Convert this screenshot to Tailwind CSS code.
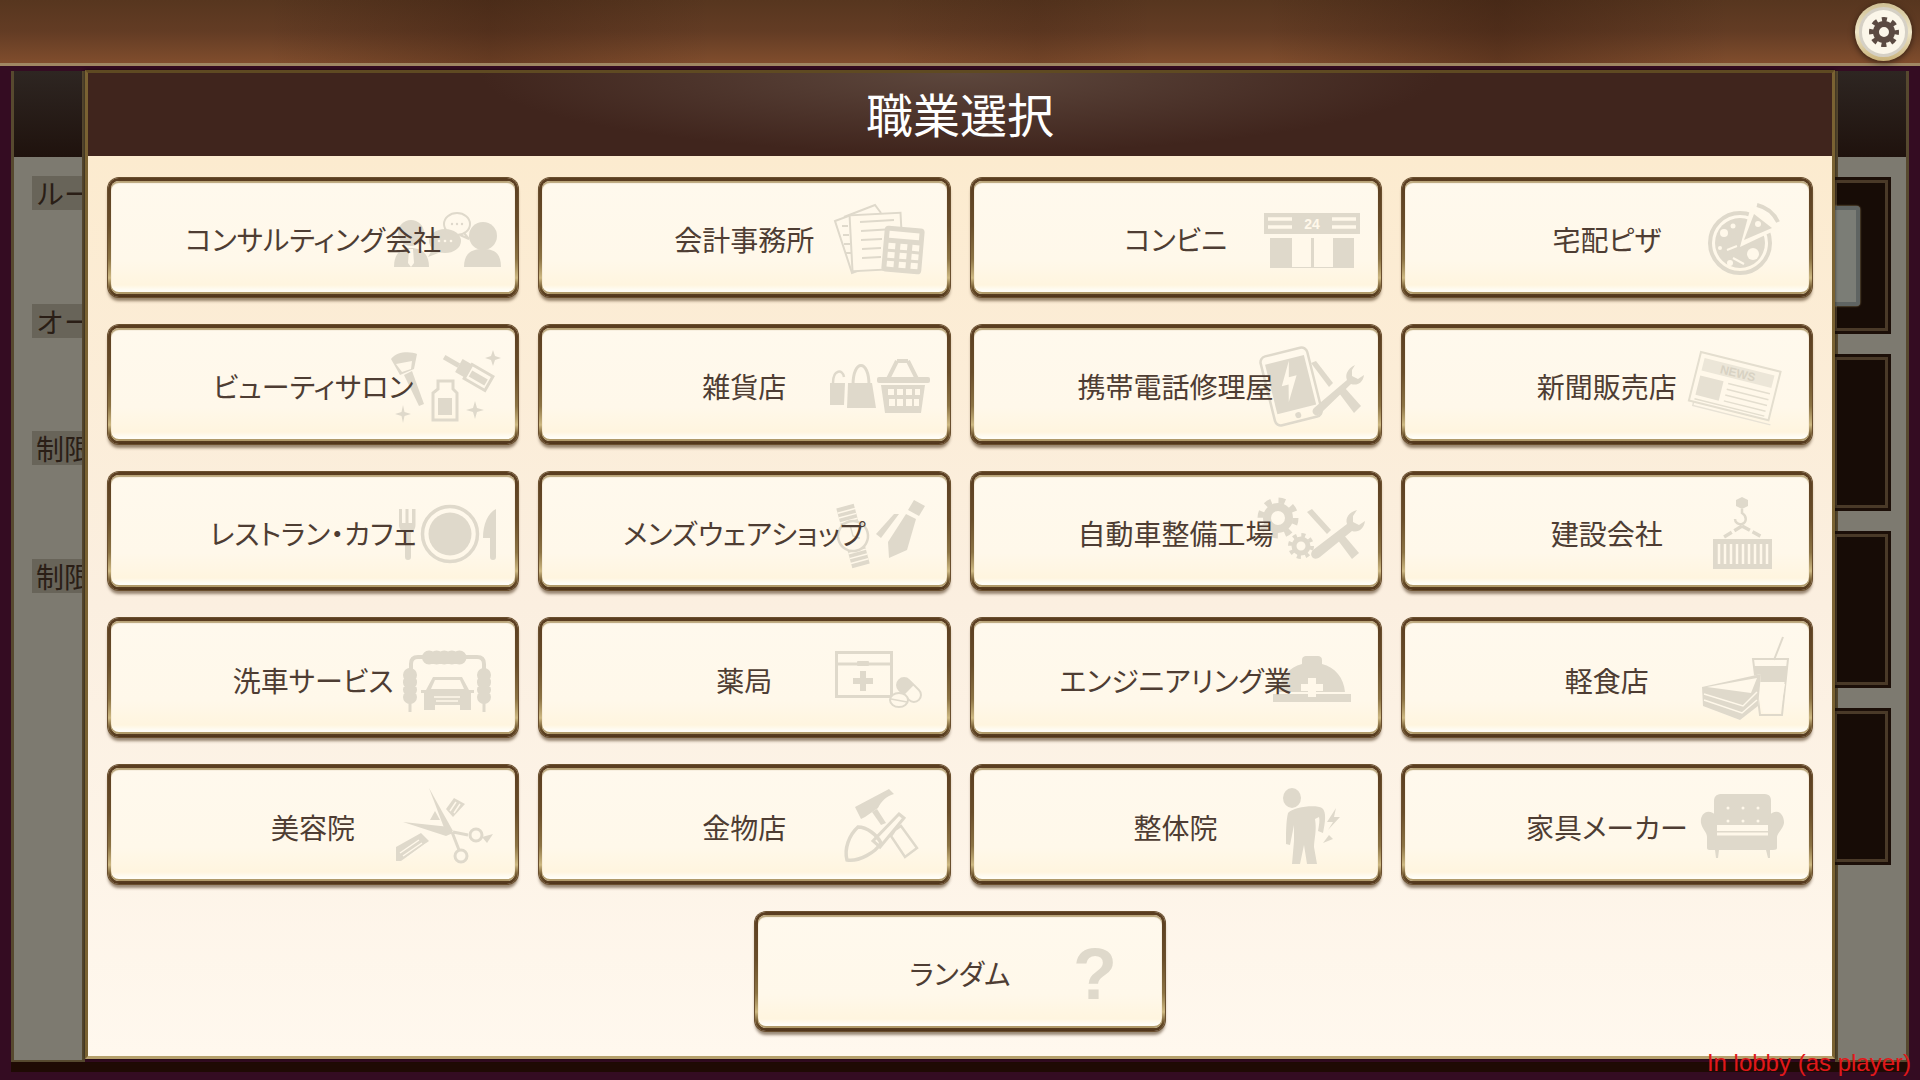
<!DOCTYPE html>
<html lang="ja">
<head>
  <meta charset="UTF-8">
  <title>職業選択</title>
  <script src="https://cdn.jsdelivr.net/npm/@tailwindcss/browser@4"></script>
</head>
<body class="bg-[#3a0e26]">
<div class="relative w-[1920px] h-[1080px] overflow-hidden flex flex-col bg-[#340c22] font-['Noto_Sans_CJK_JP',sans-serif]">

  <!-- top bar -->
  <div class="h-[66px] shrink-0 border-b-[3px] border-[#a08763] bg-[linear-gradient(90deg,rgba(45,20,10,0)_0%,rgba(45,20,10,0)_14%,rgba(45,20,10,0.3)_25.500%,rgba(45,20,10,0)_37%,rgba(45,20,10,0)_46%,rgba(45,20,10,0.16)_54%,rgba(45,20,10,0)_60%,rgba(45,20,10,0)_66%,rgba(45,20,10,0.38)_78%,rgba(45,20,10,0)_90%),linear-gradient(180deg,#57361f_0%,#633c24_50%,#804d2d_100%)]"></div>

  <!-- lobby behind the dialog -->
  <div class="flex justify-between px-[11px] pt-[5px]">
    <div class="w-[74px] h-[992px] flex flex-col border-x-[3px] border-b-[3px] border-[#57492f]">
      <div class="h-[86px] bg-[linear-gradient(180deg,#2e2622,#1f120d)]"></div>
      <div class="flex-1 bg-[#7d7a70] pt-[19px] pl-[18px] flex flex-col gap-[93.5px] overflow-hidden">
        <div class="w-[70px] h-[34px] bg-[#686459] text-[28px] leading-[34px] pl-[4px] text-[#2a1e16] whitespace-nowrap">ルー</div>
        <div class="w-[70px] h-[34px] bg-[#686459] text-[28px] leading-[34px] pl-[4px] text-[#2a1e16] whitespace-nowrap">オー</div>
        <div class="w-[70px] h-[34px] bg-[#686459] text-[28px] leading-[34px] pl-[4px] text-[#2a1e16] whitespace-nowrap">制限</div>
        <div class="w-[70px] h-[34px] bg-[#686459] text-[28px] leading-[34px] pl-[4px] text-[#2a1e16] whitespace-nowrap">制限</div>
      </div>
    </div>
    <div class="w-[74px] h-[992px] flex flex-col border-x-[3px] border-b-[3px] border-[#57492f]">
      <div class="h-[86px] bg-[linear-gradient(180deg,#2e2622,#1f120d)]"></div>
      <div class="flex-1 bg-[#7d7a70] pt-[20px] flex flex-col gap-[20px] items-end pr-[15px]">
        <div class="w-[60px] h-[157px] flex items-center bg-[#170c06] border-[3px] border-[#1c0f08] shadow-[inset_0_0_0_3px_#4a3a28]">
          <div class="w-[26px] h-[100px] bg-[#7b7d76] border-[4px] border-l-0 border-[#5f6462] rounded-r-[4px] shadow-[0_0_2px_#b8a878]"></div>
        </div>
        <div class="w-[60px] h-[157px] bg-[#170c06] border-[3px] border-[#1c0f08] shadow-[inset_0_0_0_3px_#4a3a28]"></div>
        <div class="w-[60px] h-[157px] bg-[#170c06] border-[3px] border-[#1c0f08] shadow-[inset_0_0_0_3px_#4a3a28]"></div>
        <div class="w-[60px] h-[157px] bg-[#170c06] border-[3px] border-[#1c0f08] shadow-[inset_0_0_0_3px_#4a3a28]"></div>
      </div>
    </div>
  </div>
  <div class="absolute left-[11px] right-[11px] top-[1062px] h-[10px] bg-[#1f0a04]"></div>

  <!-- settings button -->
  <div class="absolute left-[1855px] top-[3px] w-[57px] h-[58px] rounded-full p-[4px] bg-[linear-gradient(180deg,#cfc094,#efe6c8_50%,#c9b27a)] shadow-[0_2px_6px_rgba(0,0,0,0.55)]">
    <div class="w-full h-full rounded-full p-[3px] bg-[#d5d0c5]">
      <div class="w-full h-full rounded-full bg-[#fbf6e9] flex items-center justify-center">
        <svg class="w-[32px] h-[32px]" viewBox="0 0 32 32" fill="none" stroke="#5b4a42">
          <circle cx="16" cy="16" r="8" stroke-width="6"/>
          <circle cx="16" cy="16" r="12.5" stroke-width="5" stroke-dasharray="5 4.82" stroke-dashoffset="2.5"/>
        </svg>
      </div>
    </div>
  </div>

  <!-- job select dialog -->
  <div class="absolute left-[85px] top-[70px] w-[1750px] h-[989px] flex flex-col border-[3px] border-t-[#5f4a22] border-x-[#7a6232] border-b-[#b5a06c] shadow-[0_0_3px_rgba(0,0,0,0.6)]">
    <div class="h-[83px] shrink-0 flex items-center justify-center pb-[4px] text-white text-[47px] leading-none [font-feature-settings:'palt'] bg-[radial-gradient(ellipse_480px_80px_at_50%_0%,#5d473d,#40251d)]">職業選択</div>
    <div class="flex-1 pt-[22px] px-[20px] bg-[linear-gradient(180deg,#fcebcf_0%,#fbefe0_50%,#fff8ee_100%)]">
      <div class="grid grid-cols-4 gap-x-[21px] gap-y-[28px]">

        <!-- コンサルティング会社 -->
        <div class="h-[118.8px] rounded-[11px] p-[3px] bg-[linear-gradient(180deg,#5a3d20_0%,#6a4e2a_40%,#8c7344_68%,#cdb882_84%,#6b5029_93%,#4f341b_100%)] shadow-[0_0_0_1px_#6a4f2e,0_4px_3px_rgba(70,45,20,0.55)]">
          <div class="relative h-full overflow-hidden rounded-[8px] flex items-center justify-center bg-[linear-gradient(180deg,#fff9ed,#fff8ea_70%,#fff5df_92%,#fffdf6_97%)] shadow-[inset_0_2px_1px_#b9a478,inset_0_-2px_0_#b09a6a]">
            <svg class="absolute -left-[3px] -top-[3px] w-[410px] h-[119px] fill-[#dfd9cb]" viewBox="0 0 410 119">
              <circle cx="303" cy="55" r="13"/><path d="M286 89C286 74 294 70 303 70S321 74 321 89Z"/><path d="M301 71H305L306 85 303 89 300 85Z" fill="#fff8ea"/>
              <circle cx="375" cy="58" r="14"/><path d="M356 89C356 74 365 71 375 71S393 74 393 89Z"/>
              <ellipse cx="337" cy="63" rx="16" ry="12"/><path d="M325 70L320 79 333 74Z"/>
              <circle cx="331" cy="63" r="1.3" fill="#fff8ea"/><circle cx="337" cy="63" r="1.3" fill="#fff8ea"/><circle cx="343" cy="63" r="1.3" fill="#fff8ea"/>
              <ellipse cx="349" cy="46" rx="13" ry="11" fill="none" stroke="#dfd9cb" stroke-width="2"/><path d="M356 55L361 61 352 57" fill="none" stroke="#dfd9cb" stroke-width="2"/>
              <circle cx="344" cy="46" r="1.2"/><circle cx="349" cy="46" r="1.2"/><circle cx="354" cy="46" r="1.2"/>
            </svg>
            <span class="relative pt-[4px] text-[28px] leading-none text-[#4e3d33] [font-feature-settings:'palt']">コンサルティング会社</span>
          </div>
        </div>

        <!-- 会計事務所 -->
        <div class="h-[118.8px] rounded-[11px] p-[3px] bg-[linear-gradient(180deg,#5a3d20_0%,#6a4e2a_40%,#8c7344_68%,#cdb882_84%,#6b5029_93%,#4f341b_100%)] shadow-[0_0_0_1px_#6a4f2e,0_4px_3px_rgba(70,45,20,0.55)]">
          <div class="relative h-full overflow-hidden rounded-[8px] flex items-center justify-center bg-[linear-gradient(180deg,#fff9ed,#fff8ea_70%,#fff5df_92%,#fffdf6_97%)] shadow-[inset_0_2px_1px_#b9a478,inset_0_-2px_0_#b09a6a]">
            <svg class="absolute -left-[3px] -top-[3px] w-[410px] h-[119px] fill-[#dfd9cb]" viewBox="0 0 410 119">
              <path d="M296 43L312 37 321 92 313 95Z" fill="none" stroke="#dfd9cb" stroke-width="2"/>
              <path d="M305 39L336 27 342 35" fill="none" stroke="#dfd9cb" stroke-width="2"/>
              <path d="M303 48H309M304 57H310M305 66H311M307 75H312" stroke="#dfd9cb" stroke-width="2"/>
              <rect x="312" y="36" width="51" height="56" fill="#fff8ea" stroke="#dfd9cb" stroke-width="2" transform="rotate(-3 337 64)"/>
              <path d="M321 44L355 42M322 53L355 51M322 62L343 61M323 71L342 70M323 80L342 79" stroke="#dfd9cb" stroke-width="2"/>
              <g transform="rotate(5 364 72)">
                <rect x="344" y="49" width="40" height="46" rx="4"/><rect x="349" y="54" width="30" height="7" fill="#fff8ea"/>
                <g fill="#fff8ea"><rect x="349" y="66" width="7" height="6"/><rect x="361" y="66" width="7" height="6"/><rect x="373" y="66" width="7" height="6"/><rect x="349" y="75" width="7" height="6"/><rect x="361" y="75" width="7" height="6"/><rect x="373" y="75" width="7" height="6"/><rect x="349" y="84" width="7" height="6"/><rect x="361" y="84" width="7" height="6"/><rect x="373" y="84" width="7" height="6"/></g>
              </g>
            </svg>
            <span class="relative pt-[4px] text-[28px] leading-none text-[#4e3d33] [font-feature-settings:'palt']">会計事務所</span>
          </div>
        </div>

        <!-- コンビニ -->
        <div class="h-[118.8px] rounded-[11px] p-[3px] bg-[linear-gradient(180deg,#5a3d20_0%,#6a4e2a_40%,#8c7344_68%,#cdb882_84%,#6b5029_93%,#4f341b_100%)] shadow-[0_0_0_1px_#6a4f2e,0_4px_3px_rgba(70,45,20,0.55)]">
          <div class="relative h-full overflow-hidden rounded-[8px] flex items-center justify-center bg-[linear-gradient(180deg,#fff9ed,#fff8ea_70%,#fff5df_92%,#fffdf6_97%)] shadow-[inset_0_2px_1px_#b9a478,inset_0_-2px_0_#b09a6a]">
            <svg class="absolute -left-[3px] -top-[3px] w-[410px] h-[119px] fill-[#dfd9cb]" viewBox="0 0 410 119">
              <rect x="293" y="35" width="96" height="21"/>
              <path d="M297 41H321M297 49H321M361 41H385M361 49H385" stroke="#fff8ea" stroke-width="3.500"/>
              <text x="341" y="51" text-anchor="middle" font-family="Liberation Sans" font-weight="700" font-size="14" fill="#fff8ea">24</text>
              <path d="M299 60H383V90H299Z"/>
              <rect x="321" y="60" width="19" height="29" fill="#fff8ea"/><rect x="343" y="60" width="19" height="29" fill="#fff8ea"/>
            </svg>
            <span class="relative pt-[4px] text-[28px] leading-none text-[#4e3d33] [font-feature-settings:'palt']">コンビニ</span>
          </div>
        </div>

        <!-- 宅配ピザ -->
        <div class="h-[118.8px] rounded-[11px] p-[3px] bg-[linear-gradient(180deg,#5a3d20_0%,#6a4e2a_40%,#8c7344_68%,#cdb882_84%,#6b5029_93%,#4f341b_100%)] shadow-[0_0_0_1px_#6a4f2e,0_4px_3px_rgba(70,45,20,0.55)]">
          <div class="relative h-full overflow-hidden rounded-[8px] flex items-center justify-center bg-[linear-gradient(180deg,#fff9ed,#fff8ea_70%,#fff5df_92%,#fffdf6_97%)] shadow-[inset_0_2px_1px_#b9a478,inset_0_-2px_0_#b09a6a]">
            <svg class="absolute -left-[3px] -top-[3px] w-[410px] h-[119px] fill-[#dfd9cb]" viewBox="0 0 410 119">
              <circle cx="338" cy="65" r="30" fill="none" stroke="#dfd9cb" stroke-width="4"/>
              <circle cx="338" cy="65" r="25"/>
              <path d="M338 69L349 28 378 50Z" fill="#fff8ea"/>
              <path d="M342 62L352 36 370 50Z"/>
              <path d="M355 27A31 31 0 0 1 376 44" fill="none" stroke="#dfd9cb" stroke-width="4"/>
              <g fill="#fff8ea"><circle cx="351" cy="76" r="6"/><circle cx="322" cy="55" r="4"/><circle cx="331" cy="48" r="2.5"/><circle cx="328" cy="85" r="3"/><circle cx="318" cy="70" r="2"/></g>
              <circle cx="356" cy="46" r="3" fill="#fff8ea"/>
              <path d="M325 72L335 68M331 80L342 86" stroke="#fff8ea" stroke-width="2"/>
            </svg>
            <span class="relative pt-[4px] text-[28px] leading-none text-[#4e3d33] [font-feature-settings:'palt']">宅配ピザ</span>
          </div>
        </div>

        <!-- ビューティサロン -->
        <div class="h-[118.8px] rounded-[11px] p-[3px] bg-[linear-gradient(180deg,#5a3d20_0%,#6a4e2a_40%,#8c7344_68%,#cdb882_84%,#6b5029_93%,#4f341b_100%)] shadow-[0_0_0_1px_#6a4f2e,0_4px_3px_rgba(70,45,20,0.55)]">
          <div class="relative h-full overflow-hidden rounded-[8px] flex items-center justify-center bg-[linear-gradient(180deg,#fff9ed,#fff8ea_70%,#fff5df_92%,#fffdf6_97%)] shadow-[inset_0_2px_1px_#b9a478,inset_0_-2px_0_#b09a6a]">
            <svg class="absolute -left-[3px] -top-[3px] w-[410px] h-[119px] fill-[#dfd9cb]" viewBox="0 0 410 119">
              <path d="M283 34C288 26 303 26 309 29L306 44 292 50Z"/><path d="M288 39L304 36 303 44 294 47Z" fill="#fff8ea"/>
              <path d="M296 50L304 46 316 79 311 81Z"/>
              <path d="M330 56H345V64L349 68V95H325V68L330 64Z" fill="none" stroke="#dfd9cb" stroke-width="3"/><rect x="330" y="73" width="14" height="17"/>
              <g transform="rotate(30 361 47)"><rect x="332" y="44" width="17" height="5"/><rect x="349" y="39" width="11" height="15"/><rect x="360" y="39" width="24" height="16" fill="none" stroke="#dfd9cb" stroke-width="3"/><rect x="363" y="44" width="18" height="7"/></g>
              <path d="M385 25L387 31 393 33 387 35 385 41 383 35 377 33 383 31Z"/>
              <path d="M295 80L296.5 87 303 89 296.5 91 295 98 293.500 91 287 89 293.500 87Z"/>
              <path d="M367 76L369 83 376 85 369 87 367 94 365 87 358 85 365 83Z"/>
            </svg>
            <span class="relative pt-[4px] text-[28px] leading-none text-[#4e3d33] [font-feature-settings:'palt']">ビューティサロン</span>
          </div>
        </div>

        <!-- 雑貨店 -->
        <div class="h-[118.8px] rounded-[11px] p-[3px] bg-[linear-gradient(180deg,#5a3d20_0%,#6a4e2a_40%,#8c7344_68%,#cdb882_84%,#6b5029_93%,#4f341b_100%)] shadow-[0_0_0_1px_#6a4f2e,0_4px_3px_rgba(70,45,20,0.55)]">
          <div class="relative h-full overflow-hidden rounded-[8px] flex items-center justify-center bg-[linear-gradient(180deg,#fff9ed,#fff8ea_70%,#fff5df_92%,#fffdf6_97%)] shadow-[inset_0_2px_1px_#b9a478,inset_0_-2px_0_#b09a6a]">
            <svg class="absolute -left-[3px] -top-[3px] w-[410px] h-[119px] fill-[#dfd9cb]" viewBox="0 0 410 119">
              <path d="M291 58H306L305 80H291Z"/><path d="M294 58C294 44 304 44 305 52" fill="none" stroke="#dfd9cb" stroke-width="2.500"/>
              <path d="M309 58H333L337 83H308Z"/><path d="M314 60C314 34 330 34 330 60" fill="none" stroke="#dfd9cb" stroke-width="3"/>
              <path d="M349 54L358 36M378 54L369 36M358 36H369" fill="none" stroke="#dfd9cb" stroke-width="4"/>
              <rect x="338" y="52" width="53" height="6" rx="2"/>
              <path d="M342 60H386L382 88H346Z"/>
              <g fill="#fff8ea"><rect x="349" y="64" width="6" height="6"/><rect x="358" y="64" width="6" height="6"/><rect x="367" y="64" width="6" height="6"/><rect x="376" y="64" width="5" height="6"/><rect x="350" y="74" width="6" height="7"/><rect x="358" y="74" width="6" height="7"/><rect x="367" y="74" width="6" height="7"/><rect x="375" y="74" width="5" height="7"/></g>
            </svg>
            <span class="relative pt-[4px] text-[28px] leading-none text-[#4e3d33] [font-feature-settings:'palt']">雑貨店</span>
          </div>
        </div>

        <!-- 携帯電話修理屋 -->
        <div class="h-[118.8px] rounded-[11px] p-[3px] bg-[linear-gradient(180deg,#5a3d20_0%,#6a4e2a_40%,#8c7344_68%,#cdb882_84%,#6b5029_93%,#4f341b_100%)] shadow-[0_0_0_1px_#6a4f2e,0_4px_3px_rgba(70,45,20,0.55)]">
          <div class="relative h-full overflow-hidden rounded-[8px] flex items-center justify-center bg-[linear-gradient(180deg,#fff9ed,#fff8ea_70%,#fff5df_92%,#fffdf6_97%)] shadow-[inset_0_2px_1px_#b9a478,inset_0_-2px_0_#b09a6a]">
            <svg class="absolute -left-[3px] -top-[3px] w-[410px] h-[119px] fill-[#dfd9cb]" viewBox="0 0 410 119">
              <g transform="rotate(-14 320 61)">
                <rect x="296" y="26" width="48" height="71" rx="6" fill="none" stroke="#dfd9cb" stroke-width="2.500"/>
                <rect x="300" y="34" width="40" height="51"/>
                <path d="M324 36L311 59 318 59 314 76 328 52 320 52Z" fill="#fff8ea"/>
                <circle cx="320" cy="91" r="3"/>
              </g>
              <path d="M384 40C376 44 374 50 376 55L343 83C339 87 344 93 349 89L380 59C386 61 392 58 393 50L387 54 381 51 381 45Z"/>
              <path d="M340 38L345 36 362 58 358 62Z"/><path d="M368 68L374 63 390 81 383 88Z"/>
            </svg>
            <span class="relative pt-[4px] text-[28px] leading-none text-[#4e3d33] [font-feature-settings:'palt']">携帯電話修理屋</span>
          </div>
        </div>

        <!-- 新聞販売店 -->
        <div class="h-[118.8px] rounded-[11px] p-[3px] bg-[linear-gradient(180deg,#5a3d20_0%,#6a4e2a_40%,#8c7344_68%,#cdb882_84%,#6b5029_93%,#4f341b_100%)] shadow-[0_0_0_1px_#6a4f2e,0_4px_3px_rgba(70,45,20,0.55)]">
          <div class="relative h-full overflow-hidden rounded-[8px] flex items-center justify-center bg-[linear-gradient(180deg,#fff9ed,#fff8ea_70%,#fff5df_92%,#fffdf6_97%)] shadow-[inset_0_2px_1px_#b9a478,inset_0_-2px_0_#b09a6a]">
            <svg class="absolute -left-[3px] -top-[3px] w-[410px] h-[119px] fill-[#dfd9cb]" viewBox="0 0 410 119">
              <g transform="rotate(14 332 64)">
                <path d="M296 42V90H376" fill="none" stroke="#e8e2d5" stroke-width="1.500"/>
                <rect x="291" y="36" width="82" height="50" fill="#fff8ea" stroke="#e4decf" stroke-width="2"/>
                <rect x="296" y="41" width="72" height="13" fill="#ece6d8"/>
                <text x="332" y="52" text-anchor="middle" font-family="Liberation Sans" font-weight="700" font-size="12" fill="#d8d2c3">NEWS</text>
                <rect x="296" y="59" width="24" height="20" fill="#e6e0d2"/>
                <path d="M325 60H368M325 66H368M325 72H368M325 78H368M296 83H368" stroke="#e4decf" stroke-width="1.500"/>
              </g>
            </svg>
            <span class="relative pt-[4px] text-[28px] leading-none text-[#4e3d33] [font-feature-settings:'palt']">新聞販売店</span>
          </div>
        </div>

        <!-- レストラン・カフェ -->
        <div class="h-[118.8px] rounded-[11px] p-[3px] bg-[linear-gradient(180deg,#5a3d20_0%,#6a4e2a_40%,#8c7344_68%,#cdb882_84%,#6b5029_93%,#4f341b_100%)] shadow-[0_0_0_1px_#6a4f2e,0_4px_3px_rgba(70,45,20,0.55)]">
          <div class="relative h-full overflow-hidden rounded-[8px] flex items-center justify-center bg-[linear-gradient(180deg,#fff9ed,#fff8ea_70%,#fff5df_92%,#fffdf6_97%)] shadow-[inset_0_2px_1px_#b9a478,inset_0_-2px_0_#b09a6a]">
            <svg class="absolute -left-[3px] -top-[3px] w-[410px] h-[119px] fill-[#dfd9cb]" viewBox="0 0 410 119">
              <path d="M291 36H294V50H297.500V36H300.500V50H304V36H307.500V52C307.500 57 304 59 303 60V84A2.500 2.500 0 0 1 297 84V60C295 59 291 57 291 52Z" transform="translate(0 1)"/>
              <circle cx="342" cy="62" r="27.500" fill="none" stroke="#dfd9cb" stroke-width="3.500"/>
              <circle cx="342" cy="62" r="21.500"/>
              <path d="M388 37V85A3 3 0 0 1 382 85V66H375C375 52 380 41 388 37Z"/>
            </svg>
            <span class="relative pt-[4px] text-[28px] leading-none text-[#4e3d33] [font-feature-settings:'palt']">レストラン・カフェ</span>
          </div>
        </div>

        <!-- メンズウェアショップ -->
        <div class="h-[118.8px] rounded-[11px] p-[3px] bg-[linear-gradient(180deg,#5a3d20_0%,#6a4e2a_40%,#8c7344_68%,#cdb882_84%,#6b5029_93%,#4f341b_100%)] shadow-[0_0_0_1px_#6a4f2e,0_4px_3px_rgba(70,45,20,0.55)]">
          <div class="relative h-full overflow-hidden rounded-[8px] flex items-center justify-center bg-[linear-gradient(180deg,#fff9ed,#fff8ea_70%,#fff5df_92%,#fffdf6_97%)] shadow-[inset_0_2px_1px_#b9a478,inset_0_-2px_0_#b09a6a]">
            <svg class="absolute -left-[3px] -top-[3px] w-[410px] h-[119px] fill-[#dfd9cb]" viewBox="0 0 410 119">
              <g transform="rotate(-15 314 64)">
                <rect x="305" y="33" width="18" height="62"/>
                <path d="M305 38H323M305 43H323M305 48H323M305 80H323M305 85H323M305 90H323" stroke="#fff8ea" stroke-width="1.500"/>
                <circle cx="314" cy="64" r="15" fill="#fff8ea" stroke="#dfd9cb" stroke-width="2.500"/>
                <path d="M314 54V64L320 68" fill="none" stroke="#dfd9cb" stroke-width="1.500"/>
              </g>
              <path d="M375 28L386 34 380 44 369 38Z"/>
              <path d="M367 42L377 47 368 78 350 86 349 70Z"/>
              <path d="M337 62L355 42 360 42 342 66Z"/>
            </svg>
            <span class="relative pt-[4px] text-[28px] leading-none text-[#4e3d33] [font-feature-settings:'palt']">メンズウェアショップ</span>
          </div>
        </div>

        <!-- 自動車整備工場 -->
        <div class="h-[118.8px] rounded-[11px] p-[3px] bg-[linear-gradient(180deg,#5a3d20_0%,#6a4e2a_40%,#8c7344_68%,#cdb882_84%,#6b5029_93%,#4f341b_100%)] shadow-[0_0_0_1px_#6a4f2e,0_4px_3px_rgba(70,45,20,0.55)]">
          <div class="relative h-full overflow-hidden rounded-[8px] flex items-center justify-center bg-[linear-gradient(180deg,#fff9ed,#fff8ea_70%,#fff5df_92%,#fffdf6_97%)] shadow-[inset_0_2px_1px_#b9a478,inset_0_-2px_0_#b09a6a]">
            <svg class="absolute -left-[3px] -top-[3px] w-[410px] h-[119px] fill-[#dfd9cb]" viewBox="0 0 410 119">
              <g fill="none" stroke="#dfd9cb">
                <circle cx="307" cy="46" r="11" stroke-width="8"/><circle cx="307" cy="46" r="17.500" stroke-width="6" stroke-dasharray="6.500 7.240"/>
                <circle cx="330" cy="74" r="7" stroke-width="5"/><circle cx="330" cy="74" r="11" stroke-width="4" stroke-dasharray="4 4.640"/>
              </g>
              <path d="M386 38C378 40 374 46 376 52L342 78C337 83 343 90 349 85L381 59C387 61 393 57 394 49L388 53 382 50 382 44Z"/>
              <path d="M336 40L341 37 360 58 356 62Z"/><path d="M366 67L372 62 388 81 381 87Z"/>
            </svg>
            <span class="relative pt-[4px] text-[28px] leading-none text-[#4e3d33] [font-feature-settings:'palt']">自動車整備工場</span>
          </div>
        </div>

        <!-- 建設会社 -->
        <div class="h-[118.8px] rounded-[11px] p-[3px] bg-[linear-gradient(180deg,#5a3d20_0%,#6a4e2a_40%,#8c7344_68%,#cdb882_84%,#6b5029_93%,#4f341b_100%)] shadow-[0_0_0_1px_#6a4f2e,0_4px_3px_rgba(70,45,20,0.55)]">
          <div class="relative h-full overflow-hidden rounded-[8px] flex items-center justify-center bg-[linear-gradient(180deg,#fff9ed,#fff8ea_70%,#fff5df_92%,#fffdf6_97%)] shadow-[inset_0_2px_1px_#b9a478,inset_0_-2px_0_#b09a6a]">
            <svg class="absolute -left-[3px] -top-[3px] w-[410px] h-[119px] fill-[#dfd9cb]" viewBox="0 0 410 119">
              <path d="M340 25L346 28V34L340 37 334 34V28Z"/>
              <path d="M340 37V41C345 44 345 50 340 52 336 53 333 50 333 47" fill="none" stroke="#dfd9cb" stroke-width="2.500"/>
              <path d="M340 54L322 65M340 54L360 65" stroke="#dfd9cb" stroke-width="3.500" stroke-dasharray="9 3"/>
              <rect x="311" y="67" width="59" height="30"/>
              <path d="M317 72V92M323 72V92M329 72V92M335 72V92M341 72V92M347 72V92M353 72V92M359 72V92M365 72V92" stroke="#fff8ea" stroke-width="2.500"/>
            </svg>
            <span class="relative pt-[4px] text-[28px] leading-none text-[#4e3d33] [font-feature-settings:'palt']">建設会社</span>
          </div>
        </div>

        <!-- 洗車サービス -->
        <div class="h-[118.8px] rounded-[11px] p-[3px] bg-[linear-gradient(180deg,#5a3d20_0%,#6a4e2a_40%,#8c7344_68%,#cdb882_84%,#6b5029_93%,#4f341b_100%)] shadow-[0_0_0_1px_#6a4f2e,0_4px_3px_rgba(70,45,20,0.55)]">
          <div class="relative h-full overflow-hidden rounded-[8px] flex items-center justify-center bg-[linear-gradient(180deg,#fff9ed,#fff8ea_70%,#fff5df_92%,#fffdf6_97%)] shadow-[inset_0_2px_1px_#b9a478,inset_0_-2px_0_#b09a6a]">
            <svg class="absolute -left-[3px] -top-[3px] w-[410px] h-[119px] fill-[#dfd9cb]" viewBox="0 0 410 119">
              <path d="M303 54V46C303 41 306 39 310 39H369C373 39 376 41 376 46V54" fill="none" stroke="#dfd9cb" stroke-width="4"/>
              <path d="M321 39.500H359" fill="none" stroke="#dfd9cb" stroke-width="14" stroke-linecap="round" stroke-dasharray="0.100 7.500"/>
              <path d="M302 57V86M376 57V86" fill="none" stroke="#dfd9cb" stroke-width="14" stroke-linecap="round" stroke-dasharray="0.100 7.200"/>
              <path d="M302 50V94M376 50V94" stroke="#dfd9cb" stroke-width="3"/>
              <path d="M325 59H354L361 72H366V75H363V92H352V87H327V92H316V75H313V72H318Z"/>
              <path d="M327 62H352L356 71H323Z" fill="#fff8ea"/>
              <path d="M326 79H352M328 83H350" stroke="#fff8ea" stroke-width="1.500"/>
            </svg>
            <span class="relative pt-[4px] text-[28px] leading-none text-[#4e3d33] [font-feature-settings:'palt']">洗車サービス</span>
          </div>
        </div>

        <!-- 薬局 -->
        <div class="h-[118.8px] rounded-[11px] p-[3px] bg-[linear-gradient(180deg,#5a3d20_0%,#6a4e2a_40%,#8c7344_68%,#cdb882_84%,#6b5029_93%,#4f341b_100%)] shadow-[0_0_0_1px_#6a4f2e,0_4px_3px_rgba(70,45,20,0.55)]">
          <div class="relative h-full overflow-hidden rounded-[8px] flex items-center justify-center bg-[linear-gradient(180deg,#fff9ed,#fff8ea_70%,#fff5df_92%,#fffdf6_97%)] shadow-[inset_0_2px_1px_#b9a478,inset_0_-2px_0_#b09a6a]">
            <svg class="absolute -left-[3px] -top-[3px] w-[410px] h-[119px] fill-[#dfd9cb]" viewBox="0 0 410 119">
              <rect x="297.500" y="34.500" width="55" height="44" fill="none" stroke="#dfd9cb" stroke-width="3"/>
              <path d="M297 46H352" stroke="#dfd9cb" stroke-width="3"/><rect x="318" y="43" width="12" height="5" rx="1"/>
              <path d="M321 53H327V60H334V66H327V73H321V66H314V60H321Z"/>
              <g transform="rotate(45 370 72)"><rect x="356" y="65" width="28" height="14" rx="7" fill="none" stroke="#dfd9cb" stroke-width="2"/><path d="M370 65H363A7 7 0 0 0 363 79H370Z"/></g>
              <ellipse cx="360" cy="82" rx="9" ry="7" fill="#fff8ea" stroke="#dfd9cb" stroke-width="2"/><path d="M352 81L368 84" stroke="#dfd9cb" stroke-width="1.500"/>
            </svg>
            <span class="relative pt-[4px] text-[28px] leading-none text-[#4e3d33] [font-feature-settings:'palt']">薬局</span>
          </div>
        </div>

        <!-- エンジニアリング業 -->
        <div class="h-[118.8px] rounded-[11px] p-[3px] bg-[linear-gradient(180deg,#5a3d20_0%,#6a4e2a_40%,#8c7344_68%,#cdb882_84%,#6b5029_93%,#4f341b_100%)] shadow-[0_0_0_1px_#6a4f2e,0_4px_3px_rgba(70,45,20,0.55)]">
          <div class="relative h-full overflow-hidden rounded-[8px] flex items-center justify-center bg-[linear-gradient(180deg,#fff9ed,#fff8ea_70%,#fff5df_92%,#fffdf6_97%)] shadow-[inset_0_2px_1px_#b9a478,inset_0_-2px_0_#b09a6a]">
            <svg class="absolute -left-[3px] -top-[3px] w-[410px] h-[119px] fill-[#dfd9cb]" viewBox="0 0 410 119">
              <path d="M331 42C331 39 333 38 335 38H347C349 38 351 39 351 42V46C364 49 373 60 374 74H308C309 60 318 49 331 46Z"/>
              <path d="M302 76H380V84H302Z"/>
              <path d="M302 75H380" stroke="#fff8ea" stroke-width="2"/>
              <path d="M337 60H345V66H352V73H345V79H337V73H330V66H337Z" fill="#fff8ea"/>
            </svg>
            <span class="relative pt-[4px] text-[28px] leading-none text-[#4e3d33] [font-feature-settings:'palt']">エンジニアリング業</span>
          </div>
        </div>

        <!-- 軽食店 -->
        <div class="h-[118.8px] rounded-[11px] p-[3px] bg-[linear-gradient(180deg,#5a3d20_0%,#6a4e2a_40%,#8c7344_68%,#cdb882_84%,#6b5029_93%,#4f341b_100%)] shadow-[0_0_0_1px_#6a4f2e,0_4px_3px_rgba(70,45,20,0.55)]">
          <div class="relative h-full overflow-hidden rounded-[8px] flex items-center justify-center bg-[linear-gradient(180deg,#fff9ed,#fff8ea_70%,#fff5df_92%,#fffdf6_97%)] shadow-[inset_0_2px_1px_#b9a478,inset_0_-2px_0_#b09a6a]">
            <svg class="absolute -left-[3px] -top-[3px] w-[410px] h-[119px] fill-[#dfd9cb]" viewBox="0 0 410 119">
              <path d="M372 42L381 19" stroke="#dfd9cb" stroke-width="2"/>
              <path d="M351 41H386L380 97H358Z" fill="none" stroke="#dfd9cb" stroke-width="2"/>
              <path d="M352 48H385L384 64H354Z"/>
              <path d="M356 66H383L378 95H361Z" fill="#fff8ea"/>
              <path d="M300 69L359 56 356 88 338 102 301 88Z" fill="#fff8ea"/>
              <path d="M300 69L359 56 356 88 338 102 301 88Z"/>
              <path d="M305 69L355 60 349 75Z" fill="#fff8ea"/>
              <path d="M302 76L341 88 355 74M302 82L340 95 355 82" fill="none" stroke="#fff8ea" stroke-width="1.500"/>
            </svg>
            <span class="relative pt-[4px] text-[28px] leading-none text-[#4e3d33] [font-feature-settings:'palt']">軽食店</span>
          </div>
        </div>

        <!-- 美容院 -->
        <div class="h-[118.8px] rounded-[11px] p-[3px] bg-[linear-gradient(180deg,#5a3d20_0%,#6a4e2a_40%,#8c7344_68%,#cdb882_84%,#6b5029_93%,#4f341b_100%)] shadow-[0_0_0_1px_#6a4f2e,0_4px_3px_rgba(70,45,20,0.55)]">
          <div class="relative h-full overflow-hidden rounded-[8px] flex items-center justify-center bg-[linear-gradient(180deg,#fff9ed,#fff8ea_70%,#fff5df_92%,#fffdf6_97%)] shadow-[inset_0_2px_1px_#b9a478,inset_0_-2px_0_#b09a6a]">
            <svg class="absolute -left-[3px] -top-[3px] w-[410px] h-[119px] fill-[#dfd9cb]" viewBox="0 0 410 119">
              <path d="M346 33L357 39 345 52 338 44Z"/>
              <path d="M348 37L342 46M352 39L346 48" stroke="#fff8ea" stroke-width="1.500"/>
              <path d="M313 68L321 76 293 96H288V82Z"/>
              <path d="M292 88L311 75M295 91L314 78M299 93L318 79" stroke="#fff8ea" stroke-width="1.500"/>
              <path d="M321 23L345 66 338 68Z"/>
              <path d="M295 57L342 62 345 68 338 71Z"/>
              <path d="M327 46L332 55 322 55Z"/>
              <circle cx="368" cy="70" r="6" fill="#fff8ea" stroke="#dfd9cb" stroke-width="3"/>
              <path d="M374 72L385 69 379 78Z"/>
              <circle cx="353" cy="91" r="6" fill="#fff8ea" stroke="#dfd9cb" stroke-width="3"/>
              <path d="M345 67L360 70M344 67L351 85" stroke="#dfd9cb" stroke-width="3"/>
            </svg>
            <span class="relative pt-[4px] text-[28px] leading-none text-[#4e3d33] [font-feature-settings:'palt']">美容院</span>
          </div>
        </div>

        <!-- 金物店 -->
        <div class="h-[118.8px] rounded-[11px] p-[3px] bg-[linear-gradient(180deg,#5a3d20_0%,#6a4e2a_40%,#8c7344_68%,#cdb882_84%,#6b5029_93%,#4f341b_100%)] shadow-[0_0_0_1px_#6a4f2e,0_4px_3px_rgba(70,45,20,0.55)]">
          <div class="relative h-full overflow-hidden rounded-[8px] flex items-center justify-center bg-[linear-gradient(180deg,#fff9ed,#fff8ea_70%,#fff5df_92%,#fffdf6_97%)] shadow-[inset_0_2px_1px_#b9a478,inset_0_-2px_0_#b09a6a]">
            <svg class="absolute -left-[3px] -top-[3px] w-[410px] h-[119px] fill-[#dfd9cb]" viewBox="0 0 410 119">
              <path d="M316 42L350 24 355 29C347 31 342 37 339 43L326 52 322 54Z"/>
              <path d="M333 47L338 44 347 58 342 60Z"/>
              <path d="M356 65L362 61 378 83 366 92 352 71Z" fill="none" stroke="#dfd9cb" stroke-width="2.500"/>
              <path d="M360 49L365 53 341 82 334 76Z" fill="none" stroke="#dfd9cb" stroke-width="3"/>
              <path d="M319 62C328 62 338 70 342 78 337 87 320 97 308 95 305 84 310 70 319 62Z" fill="none" stroke="#dfd9cb" stroke-width="3.500"/>
            </svg>
            <span class="relative pt-[4px] text-[28px] leading-none text-[#4e3d33] [font-feature-settings:'palt']">金物店</span>
          </div>
        </div>

        <!-- 整体院 -->
        <div class="h-[118.8px] rounded-[11px] p-[3px] bg-[linear-gradient(180deg,#5a3d20_0%,#6a4e2a_40%,#8c7344_68%,#cdb882_84%,#6b5029_93%,#4f341b_100%)] shadow-[0_0_0_1px_#6a4f2e,0_4px_3px_rgba(70,45,20,0.55)]">
          <div class="relative h-full overflow-hidden rounded-[8px] flex items-center justify-center bg-[linear-gradient(180deg,#fff9ed,#fff8ea_70%,#fff5df_92%,#fffdf6_97%)] shadow-[inset_0_2px_1px_#b9a478,inset_0_-2px_0_#b09a6a]">
            <svg class="absolute -left-[3px] -top-[3px] w-[410px] h-[119px] fill-[#dfd9cb]" viewBox="0 0 410 119">
              <ellipse cx="321" cy="33" rx="9" ry="10"/>
              <path d="M317 48C322 42 345 39 351 43 356 47 354 58 352 68L347 66C348 60 349 55 348 52L344 54C346 66 343 74 343 82L346 99H336L333 80 329 99H321L323 76 323 60 319 80 315 79C315 68 315 56 317 48Z"/>
              <path d="M365 43L356 57H362L357 65 369 52H363Z"/><path d="M358 70L352 78 362 74Z"/>
            </svg>
            <span class="relative pt-[4px] text-[28px] leading-none text-[#4e3d33] [font-feature-settings:'palt']">整体院</span>
          </div>
        </div>

        <!-- 家具メーカー -->
        <div class="h-[118.8px] rounded-[11px] p-[3px] bg-[linear-gradient(180deg,#5a3d20_0%,#6a4e2a_40%,#8c7344_68%,#cdb882_84%,#6b5029_93%,#4f341b_100%)] shadow-[0_0_0_1px_#6a4f2e,0_4px_3px_rgba(70,45,20,0.55)]">
          <div class="relative h-full overflow-hidden rounded-[8px] flex items-center justify-center bg-[linear-gradient(180deg,#fff9ed,#fff8ea_70%,#fff5df_92%,#fffdf6_97%)] shadow-[inset_0_2px_1px_#b9a478,inset_0_-2px_0_#b09a6a]">
            <svg class="absolute -left-[3px] -top-[3px] w-[410px] h-[119px] fill-[#dfd9cb]" viewBox="0 0 410 119">
              <path d="M312 36C312 30 316 29 320 29H361C366 29 369 30 369 36V60H312Z"/>
              <path d="M311 48C303 44 298 51 299 58 300 64 305 67 305 72V83C305 85 307 85 309 85H371C374 85 375 84 375 83V72C376 67 381 64 382 58 382 51 378 44 370 48 366 50 366 56 366 60V66H315V60C315 56 315 50 311 48Z"/>
              <path d="M315 69H366" stroke="#fff8ea" stroke-width="3"/>
              <g fill="#fff8ea"><circle cx="326" cy="43" r="1.500"/><circle cx="341" cy="43" r="1.500"/><circle cx="356" cy="43" r="1.500"/><circle cx="326" cy="56" r="1.500"/><circle cx="341" cy="56" r="1.500"/><circle cx="356" cy="56" r="1.500"/></g>
              <path d="M313 85L317 85 316 93 314 93ZM364 85L368 85 368 93 366 93Z"/>
            </svg>
            <span class="relative pt-[4px] text-[28px] leading-none text-[#4e3d33] [font-feature-settings:'palt']">家具メーカー</span>
          </div>
        </div>
      </div>

      <!-- ランダム -->
      <div class="flex justify-center mt-[28px]">
        <div class="w-[410px] h-[118.8px] rounded-[11px] p-[3px] bg-[linear-gradient(180deg,#5a3d20_0%,#6a4e2a_40%,#8c7344_68%,#cdb882_84%,#6b5029_93%,#4f341b_100%)] shadow-[0_0_0_1px_#6a4f2e,0_4px_3px_rgba(70,45,20,0.55)]">
          <div class="relative h-full overflow-hidden rounded-[8px] flex items-center justify-center bg-[linear-gradient(180deg,#fff9ed,#fff8ea_70%,#fff5df_92%,#fffdf6_97%)] shadow-[inset_0_2px_1px_#b9a478,inset_0_-2px_0_#b09a6a]">
            <svg class="absolute -left-[3px] -top-[3px] w-[410px] h-[119px] fill-[#dfd9cb]" viewBox="0 0 410 119">
              <text x="340" y="87" text-anchor="middle" font-family="Liberation Sans" font-weight="700" font-size="72">?</text>
            </svg>
            <span class="relative pt-[4px] text-[28px] leading-none text-[#4e3d33] [font-feature-settings:'palt']">ランダム</span>
          </div>
        </div>
      </div>
    </div>
  </div>

  <div class="absolute right-[9px] top-[1050px] font-['Liberation_Sans',sans-serif] text-[24px] leading-[26px] text-[#e0181a] whitespace-nowrap">In lobby (as player)</div>
</div>
</body>
</html>
